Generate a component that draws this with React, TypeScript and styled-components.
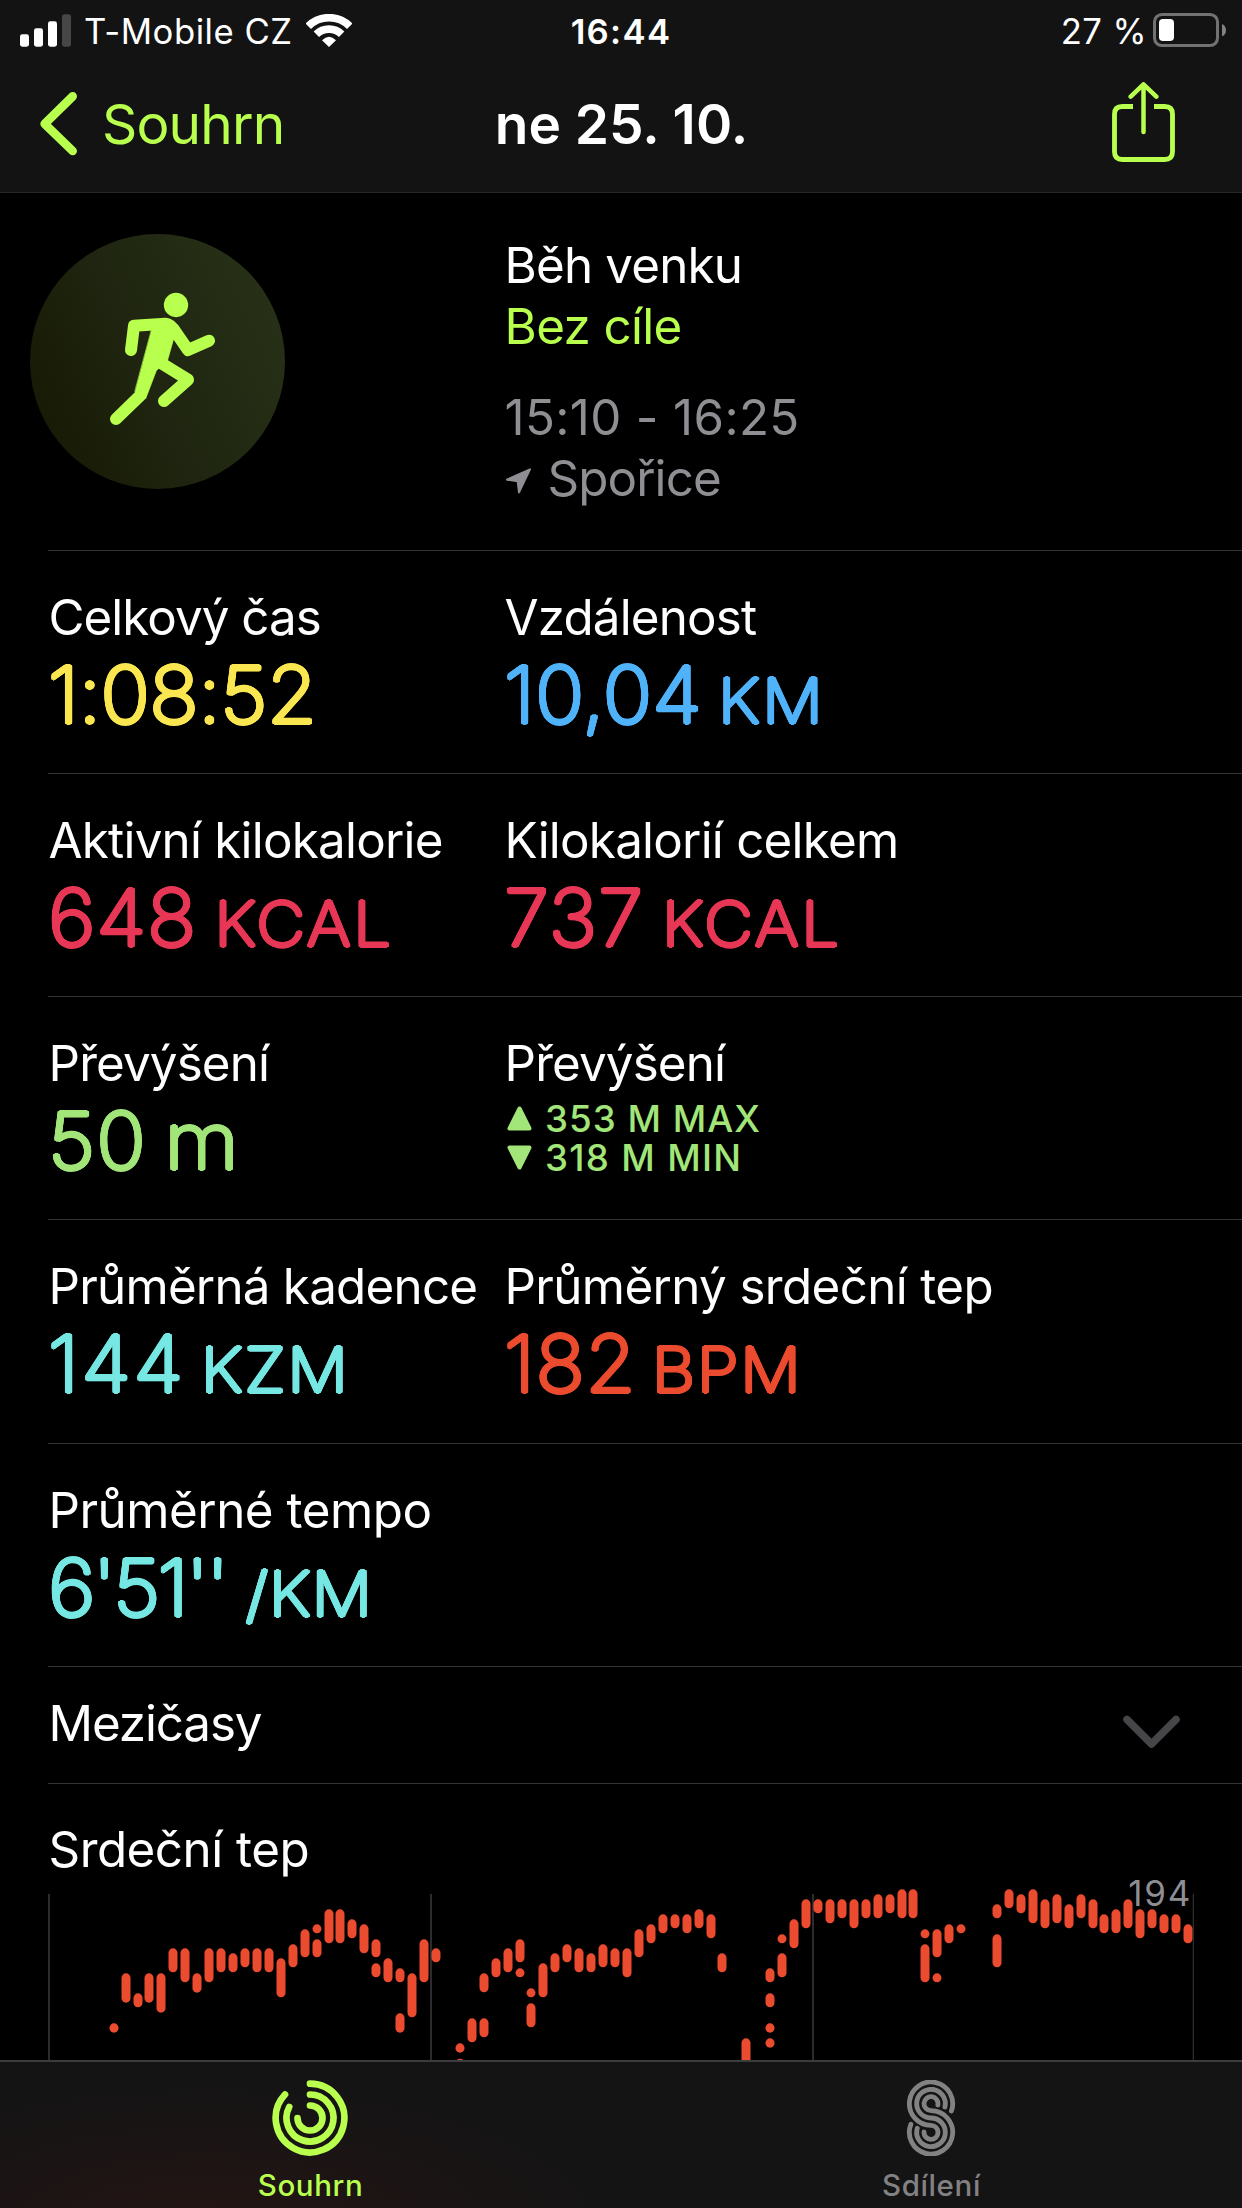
import React from "react";
import styled, { createGlobalStyle } from "styled-components";

const lime = "#b9ff4e";
const grey = "#8e8e93";
const red = "#eb4b2e";

const GlobalStyle = createGlobalStyle`
  body {
    margin: 0;
    background: #000;
    color: #fff;
    font-family: Inter, "Noto Sans", sans-serif;
  }
  svg {
    display: block;
    flex: none;
  }
`;

const Screen = styled.div`
  width: 1242px;
  height: 2208px;
  display: flex;
  flex-direction: column;
  overflow: hidden;
`;

/* ---------- Header ---------- */

const Header = styled.header`
  height: 192px;
  flex: none;
  background: #131313;
  border-bottom: 1px solid #282828;
`;

const StatusBar = styled.div`
  height: 63px;
  display: grid;
  grid-template-columns: 1fr auto 1fr;
  align-items: center;
  padding: 0 16px 0 20px;
  font-size: 34.7px;
  line-height: 40px;
  svg {
    margin-bottom: 3px;
  }
  span {
    margin-bottom: 2px;
  }
`;

const StatusSide = styled.div<{ $end?: boolean; $gap: number }>`
  display: flex;
  align-items: center;
  justify-content: ${(p) => (p.$end ? "flex-end" : "flex-start")};
  gap: ${(p) => p.$gap}px;
`;

const Clock = styled.span`
  font-weight: 600;
  letter-spacing: 1.32px;
  margin-right: 4px;
`;

const Tracked = styled.span<{ $ls: number }>`
  letter-spacing: ${(p) => p.$ls}px;
  white-space: pre;
`;

const NavBar = styled.nav`
  height: 122px;
  display: grid;
  grid-template-columns: 1fr auto 1fr;
  align-items: center;
  padding: 0 67px 0 40px;
  font-size: 55px;
`;

const BackButton = styled.a`
  display: flex;
  align-items: center;
  gap: 25px;
  color: ${lime};
  letter-spacing: -0.84px;
`;

const Title = styled.h1`
  margin: 0 0 0 28px;
  font-size: 55px;
  font-weight: 600;
`;

const ShareButton = styled.a`
  justify-self: end;
  margin-bottom: 4px;
`;

/* ---------- Workout summary ---------- */

const Content = styled.main`
  flex: 1;
  min-height: 0;
  overflow: hidden;
`;

const Hero = styled.section`
  height: 316px;
  padding: 41px 0 0 30px;
  display: grid;
  grid-template-columns: 474px 1fr;
  align-items: start;
`;

const Badge = styled.div`
  width: 255px;
  height: 255px;
  border-radius: 50%;
  background: linear-gradient(66deg, #171a04 8%, #1f2510 45%, #283218 95%);
`;

const HeroText = styled.div`
  padding: 1px 0 0 0.5px;
  font-size: 49.3px;
  line-height: 61px;
`;

const HeroLine = styled.div<{ $color?: string; $ls: number }>`
  display: flex;
  align-items: center;
  gap: 17px;
  color: ${(p) => p.$color ?? "#fff"};
  letter-spacing: ${(p) => p.$ls}px;
  white-space: pre;
  svg {
    margin: 4px 0 0 1px;
  }
`;

const HeroPair = styled.div`
  & + & {
    margin-top: 30px;
  }
`;

const Row = styled.section<{ $h?: number }>`
  box-sizing: border-box;
  height: ${(p) => p.$h ?? 223}px;
  margin-left: 48px;
  border-top: 1px solid #333335;
  padding-top: 36px;
  display: grid;
  grid-template-columns: 456px 1fr;
`;

const Label = styled.h2<{ $ls?: number }>`
  margin: 0;
  text-indent: 0.5px;
  font-size: 49.3px;
  line-height: 60px;
  font-weight: 400;
  letter-spacing: ${(p) => p.$ls ?? -0.75}px;
  white-space: nowrap;
`;

/* A ring of same-coloured shadows round a light face gives rounded stroke ends. */
const roundEnds = (color: string) =>
  Array.from({ length: 16 }, (_, i) => {
    const a = (i * Math.PI) / 8;
    return `${(1.6 * Math.cos(a)).toFixed(2)}px ${(1.6 * Math.sin(a)).toFixed(2)}px 0 ${color}`;
  }).join(",");

const Value = styled.div<{ $color: string; $ls: number }>`
  margin: 8px 0 0;
  height: 80px;
  font-size: 78.3px;
  line-height: 80px;
  font-weight: 200;
  white-space: nowrap;
  color: ${(p) => p.$color};
  letter-spacing: ${(p) => p.$ls}px;
  text-shadow: ${(p) => roundEnds(p.$color)};
  transform: scaleX(1.04);
  transform-origin: left;
`;

const Unit = styled.span<{ $ls: number; $gap: number; $full?: boolean }>`
  display: inline-block;
  margin-left: ${(p) => p.$gap}px;
  font-size: ${(p) => (p.$full ? 78.3 : 61)}px;
  font-weight: ${(p) => (p.$full ? 200 : 240)};
  line-height: 1;
  letter-spacing: ${(p) => p.$ls}px;
  transform: scaleX(${(p) => (p.$full ? 1.05 : 1.06)});
  transform-origin: left;
`;

const Extremes = styled.div`
  margin: 6px 0 0 3px;
  color: #a2e579;
  font-size: 36.7px;
  line-height: 39.3px;
  font-weight: 450;
`;

const Extreme = styled.div<{ $ls: number }>`
  display: flex;
  align-items: center;
  gap: 13px;
  letter-spacing: ${(p) => p.$ls}px;
`;

const SplitsRow = styled.section`
  box-sizing: border-box;
  height: 117px;
  margin-left: 48px;
  border-top: 1px solid #333335;
  padding: 26px 62px 0 0;
  display: flex;
  justify-content: space-between;
  align-items: flex-start;
  svg {
    margin-top: 22px;
  }
`;

const ChartSection = styled.section`
  h2 {
    margin-left: 48px;
    border-top: 1px solid #333335;
    padding-top: 35px;
  }
`;

const ChartBox = styled.div`
  position: relative;
  margin-top: 10px;
`;

const PeakLabel = styled.span`
  position: absolute;
  top: -16px;
  right: 50px;
  font-size: 35px;
  line-height: 40px;
  letter-spacing: 1.7px;
  color: ${grey};
`;

/* ---------- Tab bar ---------- */

const TabBar = styled.footer`
  box-sizing: border-box;
  height: 148px;
  flex: none;
  border-top: 2px solid #3c3c3e;
  background: radial-gradient(ellipse 420px 150px at 210px 165px, rgba(60, 22, 16, 0.4), rgba(60, 22, 16, 0) 100%),
    #141415;
  display: grid;
  grid-template-columns: 1fr 1fr;
`;

const Tab = styled.a<{ $active?: boolean }>`
  display: flex;
  flex-direction: column;
  align-items: center;
  padding-top: 18px;
  gap: 11px;
  color: ${(p) => (p.$active ? lime : "#828283")};
  font-size: 29.5px;
  line-height: 36px;
  font-weight: 500;
  letter-spacing: 0.6px;
  svg {
    margin-right: 2px;
  }
`;

/* ---------- Icons ---------- */

const SignalIcon = () => (
  <svg width="51" height="33" viewBox="60 40 153 99" fill="#fff">
    <rect x="60" y="101" width="27" height="37" rx="7" />
    <rect x="102" y="83" width="27" height="55" rx="7" />
    <rect x="144" y="62" width="27" height="76" rx="7" />
    <rect x="186" y="41" width="27" height="97" rx="7" fill="#464646" />
  </svg>
);

const WifiIcon = () => (
  <svg width="46" height="33" viewBox="918 39 138 99" fill="none" stroke="#fff" strokeWidth="23">
    <path d="M924.8 75.8A88 88 0 0 1 1049.2 75.8" />
    <path d="M949 100A54 54 0 0 1 1025 100" />
    <path d="M987 138L966 118Q987 96 1008 118Z" fill="#fff" stroke="none" />
  </svg>
);

const BatteryIcon = () => (
  <svg width="73" height="34" viewBox="975 39 219 102">
    <rect x="979.5" y="43.5" width="189" height="93" rx="22" fill="none" stroke="#727272" strokeWidth="9" />
    <rect x="993" y="57" width="45" height="66" rx="12" fill="#fff" />
    <path d="M1182 72C1198 78 1198 103 1182 109Z" fill="#828282" />
  </svg>
);

const BackIcon = () => (
  <svg width="37" height="64" viewBox="119 278 111 192" fill="none" stroke={lime} strokeWidth="26" strokeLinecap="round" strokeLinejoin="round">
    <path d="M217 291L133 373.500L217 455" />
  </svg>
);

const ShareIcon = () => (
  <svg width="63" height="80" viewBox="852 246 189 240" fill="none" stroke={lime} strokeWidth="14.500">
    <path d="M915 319.500H883Q859.500 319.500 859.500 343V455Q859.500 478.500 883 478.500H1010Q1033.500 478.500 1033.500 455V343Q1033.500 319.500 1010 319.500H978" />
    <path d="M946.500 254V396M908 290L946.500 253L985 290" strokeWidth="13.500" strokeLinecap="round" strokeLinejoin="round" />
  </svg>
);

const RunnerIcon = () => (
  <svg width="255" height="255" viewBox="90 102 765 765" fill="none" stroke={lime} strokeWidth="36" strokeLinecap="round" strokeLinejoin="round">
    <circle cx="528" cy="315" r="36.500" fill={lime} stroke="none" />
    <path d="M393 450L402 377L496 371" />
    <path d="M504 373Q514 377 520 386L564 450L627 422" />
    <path d="M486 491L564 539L492 603" />
    <path d="M348 657L421 586" />
    <path d="M456 385L497 356L528 385L521 416L503 480L469 512L437 596L421 590L405 575Z" fill={lime} stroke={lime} strokeWidth="2" />
  </svg>
);

const LocationIcon = () => (
  <svg width="25" height="26" viewBox="77 744 75 78" fill={grey} stroke={grey} strokeWidth="6" strokeLinejoin="round">
    <path d="M149 748L80 779L112 784L116 817Z" />
  </svg>
);

const Triangle = ({ down }: { down?: boolean }) => (
  <svg width="25" height="25" viewBox="0 0 25 25" fill="#a2e579" stroke="#a2e579" strokeWidth="4" strokeLinejoin="round">
    <path d={down ? "M2.500 2.500H22.500L12.500 22.500Z" : "M2.500 22.500H22.500L12.500 2.500Z"} />
  </svg>
);

const ChevronDown = () => (
  <svg width="57" height="34" viewBox="0 0 57 34" fill="none" stroke="#464648" strokeWidth="7.500" strokeLinecap="round" strokeLinejoin="round">
    <path d="M4 4.500L28.500 29L53 4.500" />
  </svg>
);

const RingsIcon = () => (
  <svg width="76" height="76" viewBox="816 690 228 228" fill="none" stroke={lime} strokeWidth="20" strokeLinecap="round">
    <path d="M930 701A103 103 0 1 1 855 733.400" />
    <path d="M930 733.500A70.500 70.500 0 1 1 867.700 771" />
    <path d="M930 766.500A37.500 37.500 0 1 1 892.500 804" />
  </svg>
);

const SharingIcon = () => (
  <svg width="50" height="76" viewBox="258 690 150 228" fill="none" stroke="#828283" strokeWidth="14.500" strokeLinecap="round">
    <path d="M394.200 783A65 65 0 1 0 333 826A21 21 0 1 1 312 846" />
    <path d="M374.800 771A43 43 0 1 0 333 804A43 43 0 1 1 291.700 835" />
    <path d="M353.600 765A21 21 0 1 0 333 782A65 65 0 1 1 272.600 823" />
  </svg>
);

/* Heart-rate ranges: x position followed by one or more [top, bottom] spans. */
const ranges: [number, ...[number, number][]][] = [
  [342, [520, 548]], [378, [370, 458]], [414, [430, 472]], [447, [370, 458]], [483, [370, 488]],
  [519, [295, 367]], [555, [295, 397]], [591, [370, 428]], [627, [295, 397]], [663, [295, 367]],
  [699, [310, 367]], [735, [295, 352]], [771, [295, 367]], [807, [295, 367]], [843, [325, 442]],
  [879, [283, 352]], [915, [238, 322]], [951, [223, 250], [268, 322]], [987, [178, 280]],
  [1020, [178, 280]], [1056, [208, 265]], [1092, [223, 310]], [1128, [268, 322], [340, 382]],
  [1164, [325, 397]], [1200, [355, 397], [490, 548]], [1236, [370, 502]], [1272, [268, 397]],
  [1308, [295, 337]], [1380, [580, 608], [626, 654]], [1416, [505, 577]], [1452, [370, 427], [505, 562]],
  [1488, [325, 382]], [1524, [295, 367]], [1560, [268, 337], [355, 382]], [1593, [415, 442], [460, 532]],
  [1629, [340, 442]], [1665, [310, 367]], [1701, [283, 337]], [1737, [295, 367]], [1773, [310, 367]],
  [1809, [283, 352]], [1845, [295, 352]], [1881, [295, 382]], [1917, [238, 322]], [1953, [223, 280]],
  [1989, [193, 250]], [2025, [193, 235]], [2061, [193, 250]], [2097, [178, 235]], [2133, [193, 265]],
  [2166, [310, 367]], [2238, [565, 700]], [2310, [355, 397], [430, 472], [520, 548], [565, 593]],
  [2346, [253, 280], [310, 382]], [2382, [208, 295]], [2418, [148, 235]], [2454, [148, 190]],
  [2490, [148, 220]], [2526, [148, 205]], [2562, [148, 235]], [2598, [148, 205]], [2634, [133, 205]],
  [2670, [133, 190]], [2706, [118, 205]], [2739, [118, 205]], [2775, [238, 265], [283, 397]],
  [2811, [238, 322], [370, 397]], [2847, [223, 280]], [2883, [223, 250]], [2991, [163, 205], [253, 352]],
  [3027, [118, 175]], [3063, [133, 190]], [3099, [118, 220]], [3135, [148, 235]], [3171, [133, 220]],
  [3207, [163, 235]], [3243, [133, 205]], [3279, [148, 235]], [3312, [193, 250]], [3348, [178, 250]],
  [3384, [148, 235]], [3420, [178, 265]], [3456, [178, 235]], [3492, [193, 250]], [3528, [193, 250]],
  [3564, [223, 280]],
];

const HeartRateChart = () => (
  <svg width="1242" height="171" viewBox="0 117 3726 513">
    <g fill="#2c2c2e">
      <rect x="144" y="132" width="6" height="500" />
      <rect x="1290" y="132" width="6" height="500" />
      <rect x="2436" y="132" width="6" height="500" />
      <rect x="3578" y="132" width="4" height="500" />
    </g>
    <g fill={red}>
      {ranges.map(([x, ...spans]) =>
        spans.map(([top, bottom]) => (
          <rect key={`${x}-${top}`} x={x - 13.5} y={top} width="27" height={bottom - top} rx="13.500" />
        ))
      )}
    </g>
  </svg>
);

export default function App() {
  return (
    <Screen>
      <GlobalStyle />
      <Header>
        <StatusBar>
          <StatusSide $gap={13}>
            <SignalIcon />
            <Tracked $ls={0.5}>T-Mobile CZ</Tracked>
            <WifiIcon />
          </StatusSide>
          <Clock>16:44</Clock>
          <StatusSide $end $gap={6}>
            <Tracked $ls={0.4}>27 %</Tracked>
            <BatteryIcon />
          </StatusSide>
        </StatusBar>
        <NavBar>
          <BackButton>
            <BackIcon />
            Souhrn
          </BackButton>
          <Title>ne 25. 10.</Title>
          <ShareButton>
            <ShareIcon />
          </ShareButton>
        </NavBar>
      </Header>

      <Content>
        <Hero>
          <Badge>
            <RunnerIcon />
          </Badge>
          <HeroText>
            <HeroPair>
              <HeroLine $ls={-0.8}>Běh venku</HeroLine>
              <HeroLine $ls={-0.62} $color={lime}>Bez cíle</HeroLine>
            </HeroPair>
            <HeroPair>
              <HeroLine $ls={0.35} $color={grey}>15:10 - 16:25</HeroLine>
              <HeroLine $ls={-0.9} $color={grey}>
                <LocationIcon />
                Spořice
              </HeroLine>
            </HeroPair>
          </HeroText>
        </Hero>

        <Row>
          <div>
            <Label $ls={-0.96}>Celkový čas</Label>
            <Value $color="#fae650" $ls={-0.4}>1:08:52</Value>
          </div>
          <div>
            <Label $ls={-0.8}>Vzdálenost</Label>
            <Value $color="#50b3fa" $ls={0.1}>10,04<Unit $ls={2} $gap={15.7}>KM</Unit></Value>
          </div>
        </Row>
        <Row>
          <div>
            <Label>Aktivní kilokalorie</Label>
            <Value $color="#e83756" $ls={0.85}>648<Unit $ls={2.2} $gap={16.3}>KCAL</Unit></Value>
          </div>
          <div>
            <Label $ls={-0.75}>Kilokalorií celkem</Label>
            <Value $color="#e83756" $ls={1}>737<Unit $ls={2.3} $gap={17.2}>KCAL</Unit></Value>
          </div>
        </Row>
        <Row>
          <div>
            <Label $ls={-0.85}>Převýšení</Label>
            <Value $color="#a2e579" $ls={1.3}>50<Unit $ls={0} $gap={16.5} $full>m</Unit></Value>
          </div>
          <div>
            <Label $ls={-0.85}>Převýšení</Label>
            <Extremes>
              <Extreme $ls={1}><Triangle />353 M MAX</Extreme>
              <Extreme $ls={1.3}><Triangle down />318 M MIN</Extreme>
            </Extremes>
          </div>
        </Row>
        <Row $h={224}>
          <div>
            <Label>Průměrná kadence</Label>
            <Value $color="#76e7e3" $ls={2.2}>144<Unit $ls={1.5} $gap={14.3}>KZM</Unit></Value>
          </div>
          <div>
            <Label $ls={-0.61}>Průměrný srdeční tep</Label>
            <Value $color={red} $ls={0.6}>182<Unit $ls={1.7} $gap={15.2}>BPM</Unit></Value>
          </div>
        </Row>
        <Row>
          <div>
            <Label $ls={-0.46}>Průměrné tempo</Label>
            <Value $color="#76e7e3" $ls={-2.6}>6'51''<Unit $ls={0.7} $gap={18.2}>/KM</Unit></Value>
          </div>
        </Row>

        <SplitsRow>
          <Label $ls={-1.1}>Mezičasy</Label>
          <ChevronDown />
        </SplitsRow>

        <ChartSection>
          <Label $ls={-0.48}>Srdeční tep</Label>
          <ChartBox>
            <HeartRateChart />
            <PeakLabel>194</PeakLabel>
          </ChartBox>
        </ChartSection>
      </Content>

      <TabBar>
        <Tab $active>
          <RingsIcon />
          Souhrn
        </Tab>
        <Tab>
          <SharingIcon />
          Sdílení
        </Tab>
      </TabBar>
    </Screen>
  );
}
